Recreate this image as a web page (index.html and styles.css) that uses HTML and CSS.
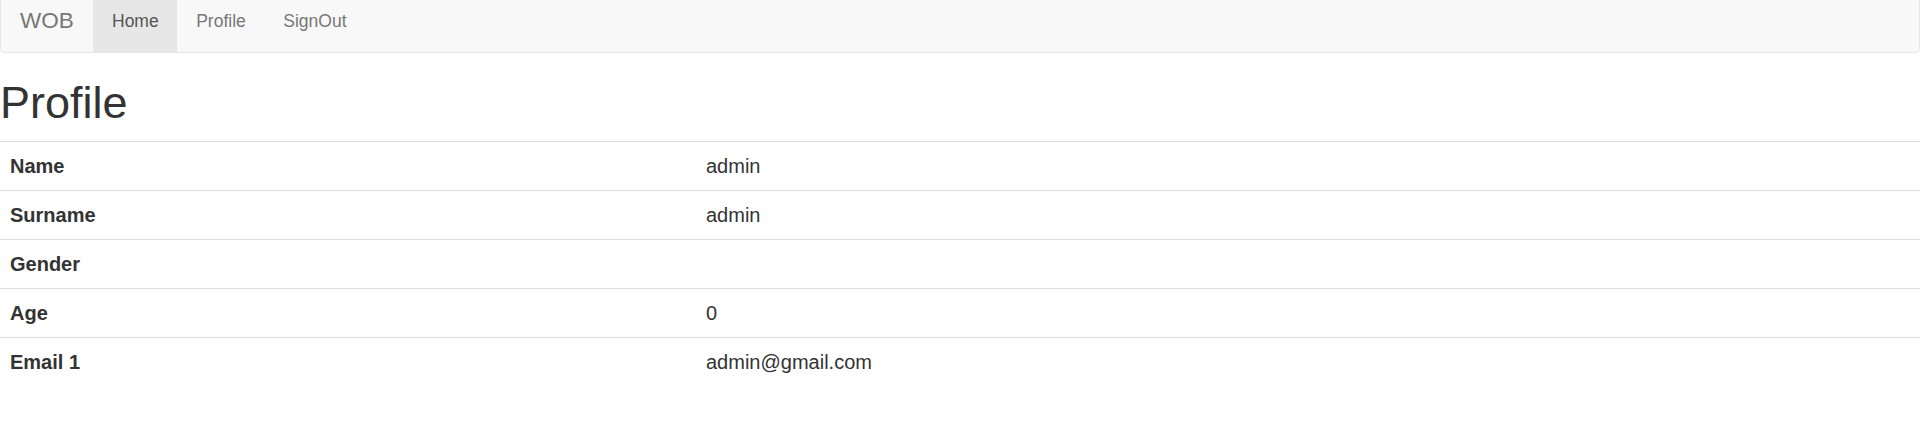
FILE: index.html
```html
<!DOCTYPE html>
<html>
<head>
<meta charset="utf-8">
<title>Profile</title>
<link rel="stylesheet" href="styles.css">
</head>
<body>
<nav class="navbar">
  <a class="brand" href="#">WOB</a>
  <ul class="nav">
    <li class="active"><a href="#">Home</a></li>
    <li><a href="#">Profile</a></li>
    <li><a href="#">SignOut</a></li>
  </ul>
</nav>
<h1 class="title">Profile</h1>
<table class="profile">
  <tbody>
    <tr><th class="label">Name</th><td>admin</td></tr>
    <tr><th class="label">Surname</th><td>admin</td></tr>
    <tr><th class="label">Gender</th><td></td></tr>
    <tr><th class="label">Age</th><td>0</td></tr>
    <tr><th class="label">Email 1</th><td>admin@gmail.com</td></tr>
  </tbody>
</table>
</body>
</html>
```

FILE: styles.css
```css
html, body {
  margin: 0;
  padding: 0;
  background: #fff;
}
body {
  font-family: "Liberation Sans", Arial, Helvetica, sans-serif;
  color: #333;
}
.navbar {
  display: flex;
  align-items: stretch;
  background: #f8f8f8;
  border: 1px solid #e7e7e7;
  border-top: none;
  border-radius: 0 0 5px 5px;
  height: 52px;
}
.brand {
  display: block;
  padding: 8px 19.5px 0 19px;
  font-size: 22.5px;
  line-height: 25px;
  color: #777;
  text-decoration: none;
}
.nav {
  display: flex;
  list-style: none;
  margin: 0;
  padding: 0;
}
.nav li a {
  display: block;
  padding: 9px 18.75px 18px;
  font-size: 17.5px;
  line-height: 25px;
  color: #777;
  text-decoration: none;
}
.nav li.active a {
  background: #e7e7e7;
  color: #555;
}
.title {
  font-size: 45px;
  font-weight: 500;
  line-height: 1.1;
  margin: 25px 0 13px;
  color: #333;
}
.profile {
  width: 100%;
  border-collapse: collapse;
  border-spacing: 0;
  font-size: 20px;
  line-height: 28px;
}
.profile th,
.profile td {
  padding: 10px;
  border-top: 1px solid #ddd;
  text-align: left;
  vertical-align: top;
}
.profile .label {
  width: 676px;
  font-weight: bold;
}
```
